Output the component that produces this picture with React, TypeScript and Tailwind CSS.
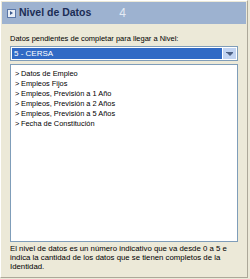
const items = [
  "Datos de Empleo",
  "Empleos Fijos",
  "Empleos, Previsión a 1 Año",
  "Empleos, Previsión a 2 Años",
  "Empleos, Previsión a 5 Años",
  "Fecha de Constitución",
];

export default function App() {
  return (
    <div className="w-[250px] h-[279px] bg-[#ECE9D8] font-['Liberation_Sans',sans-serif] text-black">
      <div className="w-[248px] h-[278px] border-t border-l border-white border-r border-b border-r-[#ACA899] border-b-[#ACA899] flex flex-col">
        <div className="mx-[1px] mt-[1px] h-[22px] bg-[#9DB2D0] flex items-center pl-[5px]">
          <div className="w-[9px] h-[9px] bg-[#E8EEF6] border border-[#5A77A8] flex items-center justify-center">
            <div className="w-0 h-0 border-y-[2.5px] border-y-transparent border-l-[3px] border-l-[#3B5A8E]" />
          </div>
          <span className="ml-[3px] text-[10.5px] font-bold text-[#1C2D55]">Nivel de Datos</span>
          <span className="ml-[28px] text-[12px] text-[#E4EBF4]">4</span>
        </div>
        <div className="px-[9px] pt-[10px] flex flex-col">
          <div className="text-[7.5px] leading-[10px]">Datos pendientes de completar para llegar a Nivel:</div>
          <div className="mt-[2px] h-[15px] border border-[#7F9DB9] bg-white flex items-stretch p-[1px]">
            <div className="flex-1 bg-[#316AC5] text-white text-[8px] flex items-center pl-[2px]">5 - CERSA</div>
            <div className="w-[13px] ml-[1px] bg-[#C1D3F1] flex flex-col items-center justify-center">
              <div className="w-[7px] h-[1px] bg-[#4D6185]" />
              <div className="w-0 h-0 border-x-[3.5px] border-x-transparent border-t-[3px] border-t-[#4D6185]" />
            </div>
          </div>
          <div className="mt-[3px] h-[178px] border border-[#7F9DB9] bg-white pt-[4px] pl-[4px]">
            {items.map((t) => (
              <div key={t} className="text-[7.4px] leading-[10px] flex">
                <span className="w-[6px]">&gt;</span>
                <span>{t}</span>
              </div>
            ))}
          </div>
          <div className="mt-[2px] text-[7.8px] leading-[9px]">
            El nivel de datos es un número indicativo que va desde 0 a 5 e indica la cantidad de los datos que se tienen completos de la Identidad.
          </div>
        </div>
      </div>
    </div>
  );
}
